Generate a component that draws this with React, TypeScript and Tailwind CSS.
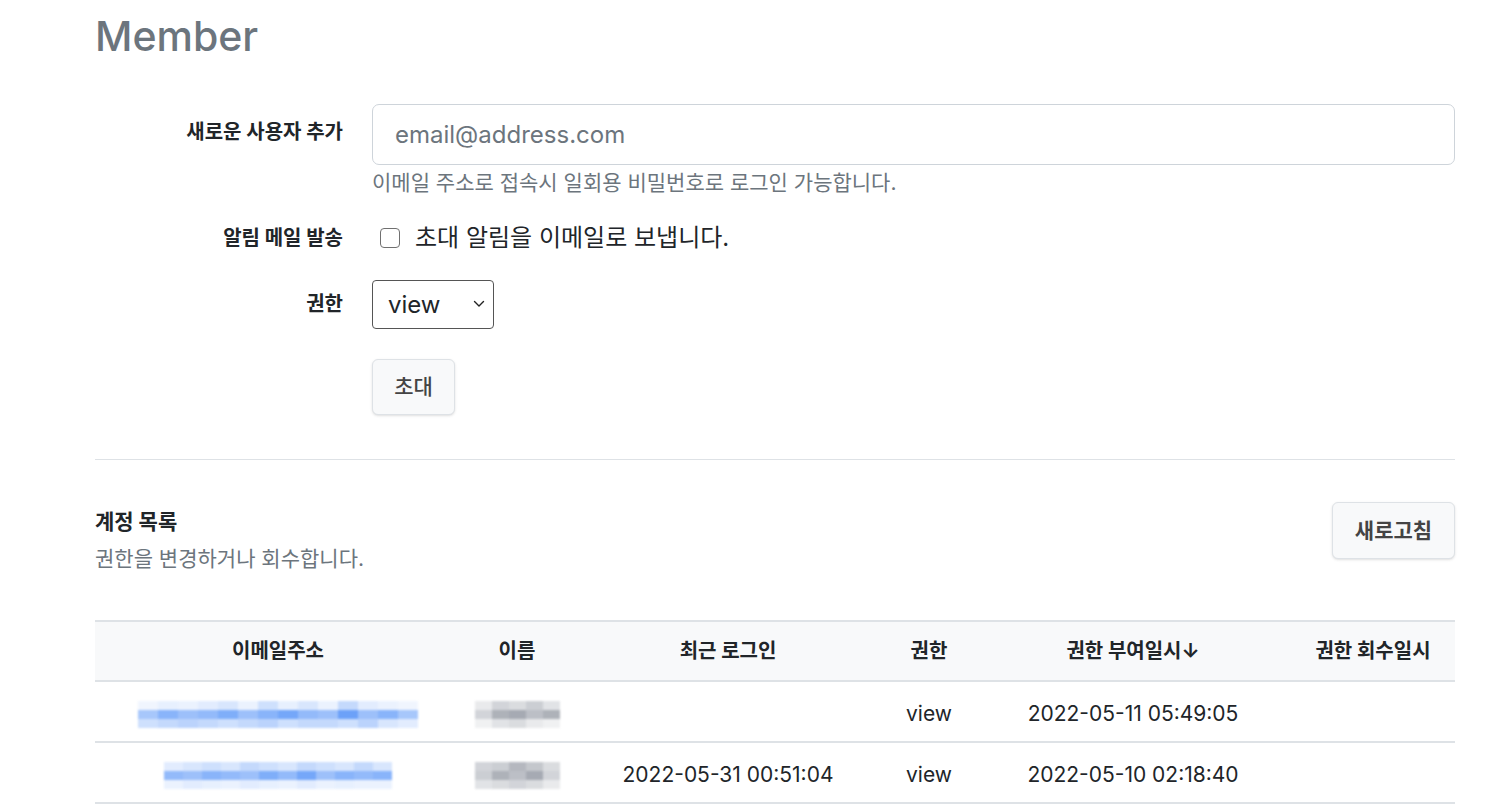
import React from "react";

const font = { fontFamily: 'Inter, "Noto Sans CJK KR", sans-serif' };

// blurred / pixelated placeholders for private data
function Pixelated({ cols, tones, color, cell }: { cols: number; tones: number[][]; color: string; cell: number }) {
    return (
        <div className="flex flex-col">
            {tones.map((row, r) => (
                <div key={r} className="flex">
                    {Array.from({ length: cols }).map((_, c) => (
                        <div
                            key={c}
                            style={{ width: cell, height: 9, backgroundColor: color, opacity: row[c % row.length] }}
                        />
                    ))}
                </div>
            ))}
        </div>
    );
}

const rows = [
    {
        recent: "",
        role: "view",
        granted: "2022-05-11 05:49:05",
        email: [
            [0.08, 0.12, 0.1, 0.15, 0.2, 0.1, 0.25, 0.12, 0.2, 0.1, 0.3, 0.15, 0.1, 0.08],
            [0.45, 0.6, 0.5, 0.55, 0.65, 0.5, 0.6, 0.7, 0.55, 0.5, 0.75, 0.5, 0.6, 0.45],
            [0.25, 0.3, 0.35, 0.3, 0.25, 0.3, 0.35, 0.25, 0.3, 0.3, 0.25, 0.35, 0.2, 0.15],
        ],
        name: [
            [0.15, 0.3, 0.25, 0.35, 0.2],
            [0.3, 0.55, 0.6, 0.45, 0.55],
            [0.1, 0.2, 0.25, 0.15, 0.1],
        ],
    },
    {
        recent: "2022-05-31 00:51:04",
        role: "view",
        granted: "2022-05-10 02:18:40",
        email: [
            [0.15, 0.2, 0.25, 0.2, 0.3, 0.25, 0.2, 0.3, 0.25, 0.2, 0.3, 0.2],
            [0.55, 0.5, 0.6, 0.55, 0.5, 0.65, 0.55, 0.7, 0.5, 0.6, 0.55, 0.6],
            [0.1, 0.15, 0.12, 0.1, 0.15, 0.12, 0.1, 0.15, 0.1, 0.12, 0.1, 0.1],
        ],
        name: [
            [0.3, 0.35, 0.5, 0.4, 0.25],
            [0.35, 0.55, 0.45, 0.6, 0.3],
            [0.2, 0.25, 0.3, 0.25, 0.15],
        ],
    },
];

const gridCols = "grid grid-cols-[366px_112px_310px_92px_316px_164px]";

export default function App() {
    return (
        <div style={font} className="w-[1500px] h-[804px] overflow-hidden bg-white text-[#212529]">
            <div className="ml-[95px] mr-[45px] pt-[10px]">
                <h1 className="text-[41px] leading-[52px] font-medium text-[#6c757d]">Member</h1>

                {/* 초대 폼 */}
                <div className="mt-[42px] grid grid-cols-[248px_1fr] gap-x-[29px]">
                    <label className="text-right text-[20px] font-bold pt-[16px] leading-[24px]">새로운 사용자 추가</label>
                    <div>
                        <input
                            type="text"
                            placeholder="email@address.com"
                            className="w-full h-[61px] border border-[#ced4da] rounded-[7px] px-[22px] text-[24px] placeholder:text-[#6c757d] outline-none"
                        />
                        <p className="mt-[5px] text-[21px] leading-[26px] text-[#6c757d]">
                            이메일 주소로 접속시 일회용 비밀번호로 로그인 가능합니다.
                        </p>
                    </div>

                    <label className="mt-[30px] text-right text-[20px] font-bold leading-[24px]">알림 메일 발송</label>
                    <div className="mt-[30px] flex items-center h-[24px] pl-[8px]">
                        <span className="w-[20px] h-[20px] border-[1.5px] border-[#707070] rounded-[4px] bg-white" />
                        <span className="ml-[15px] text-[24px] leading-[24px]">초대 알림을 이메일로 보냅니다.</span>
                    </div>

                    <label className="mt-[30px] text-right text-[20px] font-bold leading-[49px]">권한</label>
                    <div className="mt-[30px]">
                        <div className="relative w-[122px] h-[49px]">
                            <select className="appearance-none w-full h-full border border-[#555] rounded-[4px] pl-[15px] text-[24px] bg-white outline-none">
                                <option>view</option>
                            </select>
                            <svg className="absolute right-[9px] top-[20px] pointer-events-none" width="12" height="8" viewBox="0 0 12 8" fill="none">
                                <path d="M1.5 1.5L6 6L10.5 1.5" stroke="#222" strokeWidth="1.4" strokeLinecap="round" strokeLinejoin="round" />
                            </svg>
                        </div>
                    </div>

                    <div />
                    <div className="mt-[30px]">
                        <button className="w-[83px] h-[56px] bg-[#f8f9fa] border border-[#dee2e6] rounded-[6px] shadow-sm text-[21px] font-medium text-[#444]">
                            초대
                        </button>
                    </div>
                </div>

                <hr className="mt-[44px] border-t border-[#dee2e6]" />

                {/* 계정 목록 */}
                <div className="mt-[42px] flex justify-between items-start">
                    <div>
                        <h2 className="mt-[7px] text-[21px] font-bold leading-[26px]">계정 목록</h2>
                        <p className="mt-[11px] text-[21px] leading-[26px] text-[#6c757d]">권한을 변경하거나 회수합니다.</p>
                    </div>
                    <button className="w-[123px] h-[57px] bg-[#f8f9fa] border border-[#dee2e6] rounded-[6px] shadow-sm text-[21px] font-bold text-[#444]">
                        새로고침
                    </button>
                </div>

                <div className="mt-[48px]">
                    <div className={`${gridCols} h-[62px] items-center bg-[#f8f9fa] border-t-2 border-b-2 border-[#dee2e6] text-[20px] font-bold text-center`}>
                        <div>이메일주소</div>
                        <div>이름</div>
                        <div>최근 로그인</div>
                        <div>권한</div>
                        <div>권한 부여일시↓</div>
                        <div>권한 회수일시</div>
                    </div>
                    {rows.map((r, i) => (
                        <div key={i} className={`${gridCols} h-[61px] pt-[5px] items-center border-b-2 border-[#dee2e6] text-[21px] text-center`}>
                            <div className="flex justify-center blur-[1px]">
                                <Pixelated cols={r.email[0].length} tones={r.email} color="#3b82f6" cell={i === 0 ? 20 : 19} />
                            </div>
                            <div className="flex justify-center blur-[1px]">
                                <Pixelated cols={5} tones={r.name} color="#6b7280" cell={17} />
                            </div>
                            <div>{r.recent}</div>
                            <div>{r.role}</div>
                            <div>{r.granted}</div>
                            <div></div>
                        </div>
                    ))}
                </div>
            </div>
        </div>
    );
}
